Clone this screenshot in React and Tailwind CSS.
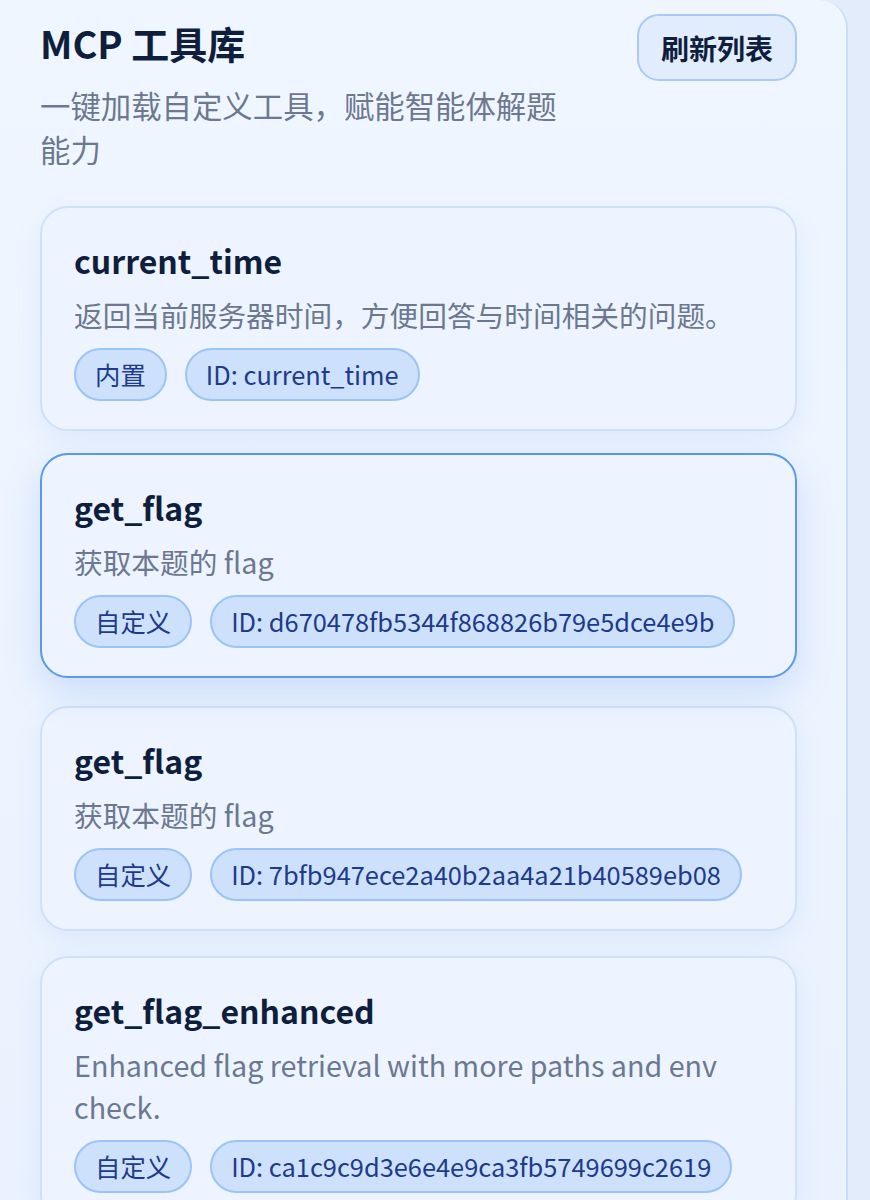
import React from 'react';

const tools = [
  {
    name: 'current_time',
    desc: '返回当前服务器时间，方便回答与时间相关的问题。',
    kind: '内置',
    id: 'current_time',
  },
  {
    name: 'get_flag',
    desc: '获取本题的 flag',
    kind: '自定义',
    id: 'd670478fb5344f868826b79e5dce4e9b',
    active: true,
  },
  {
    name: 'get_flag',
    desc: '获取本题的 flag',
    kind: '自定义',
    id: '7bfb947ece2a40b2aa4a21b40589eb08',
  },
  {
    name: 'get_flag_enhanced',
    desc: 'Enhanced flag retrieval with more paths and env check.',
    kind: '自定义',
    id: 'ca1c9c9d3e6e4e9ca3fb5749699c2619',
  },
];

const Badge = ({ children }) => (
  <span className="h-[53px] px-[19px] flex items-center rounded-full border-2 border-[#9cc3f7] bg-[#cde1fc] text-[25.4px] leading-none text-[#1e3a8a] whitespace-nowrap">
    {children}
  </span>
);

const ToolCard = ({ tool }) => (
  <div
    className={`rounded-[28px] border-2 bg-[#edf4ff] pt-[30px] pb-[28px] px-8 ${
      tool.active
        ? 'border-[#5b97ee] -translate-y-[3px] shadow-[0_14px_36px_rgba(80,140,235,0.22)]'
        : 'border-[#cfe0f9] shadow-[0_8px_26px_rgba(110,160,235,0.12)]'
    }`}
  >
    <h3 className="text-[32px] leading-[44px] font-bold text-[#0f1e3d]">{tool.name}</h3>
    <p className="mt-3 text-[28.7px] leading-[42px] text-[#6b7890]">{tool.desc}</p>
    <div className="mt-3 flex flex-wrap gap-[18px]">
      <Badge>{tool.kind}</Badge>
      <Badge>ID: {tool.id}</Badge>
    </div>
  </div>
);

export default function App() {
  return (
    <div
      className="min-h-screen w-full bg-[#e2ecfb] flex"
      style={{ fontFamily: '"Noto Sans CJK SC", "Noto Sans", sans-serif' }}
    >
      <div className="w-[848px] min-h-[1200px] border-r-2 border-[#cadcf6] rounded-tr-[28px] bg-gradient-to-b from-[#f0f6ff] to-[#e9f2fe] pl-10 pr-[49px] pt-[14px] overflow-hidden">
        {/* Header */}
        <div className="flex items-start justify-between">
          <div className="pt-[5px]">
            <h2 className="text-[38px] leading-[48px] font-bold text-[#0f1e3d]">MCP 工具库</h2>
            <p className="mt-[16px] max-w-[535px] text-[30.4px] leading-[44px] text-[#6b7890]">
              一键加载自定义工具，赋能智能体解题能力
            </p>
          </div>
          <button className="h-[67px] px-[22px] rounded-[22px] border-2 border-[#a9c9f7] bg-[#e1edfd] text-[28px] font-bold text-[#0f1e3d] whitespace-nowrap">
            刷新列表
          </button>
        </div>

        {/* Tool list */}
        <div className="mt-[35px] flex flex-col gap-[25px]">
          {tools.map((tool, i) => (
            <ToolCard key={i} tool={tool} />
          ))}
        </div>
      </div>
    </div>
  );
}
